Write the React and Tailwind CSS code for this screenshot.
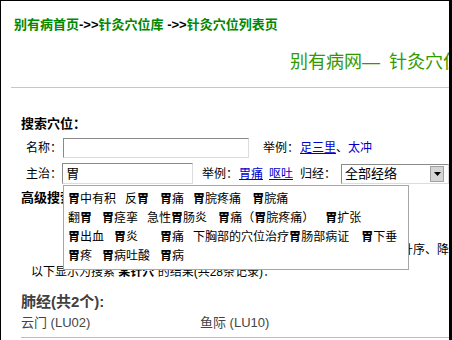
import React from 'react';

const font = "font-['Liberation_Sans','Noto_Sans_CJK_SC',sans-serif]";

// every 胃 in the suggestion list is shown in bold
function Hl({ text }) {
  const parts = text.split('胃');
  return (
    <span>
      {parts.map((p, i) => (
        <React.Fragment key={i}>
          {i > 0 && <b className="font-bold">胃</b>}
          {p}
        </React.Fragment>
      ))}
    </span>
  );
}

const suggestRows = [
  [['胃中有积', 9], ['反胃', 11], ['胃痛', 9], ['胃脘疼痛', 11], ['胃脘痛', 0]],
  [['翻胃', 10], ['胃痉挛', 9], ['急性胃肠炎', 11], ['胃痛（胃脘疼痛）', 11], ['胃扩张', 0]],
  [['胃出血', 10], ['胃炎', 22], ['胃痛', 9], ['下胸部的穴位治疗胃肠部病证', 12], ['胃下垂', 0]],
  [['胃疼', 10], ['胃病吐酸', 10], ['胃病', 0]],
];

export default function App() {
  return (
    <div className={`${font} relative w-[452px] h-[340px] overflow-hidden bg-white border-t border-l border-r-[3px] border-black text-black`}>
      {/* breadcrumb */}
      <div className="mt-[16px] pl-[13px] text-[13px] leading-[16px] font-bold whitespace-nowrap">
        <span className="text-[#008800]">别有病首页</span>
        <span>-&gt;&gt;</span>
        <span className="text-[#008800]">针灸穴位库</span>
        <span> -&gt;&gt;</span>
        <span className="text-[#008800]">针灸穴位列表页</span>
      </div>

      {/* title */}
      <div className="mt-[18px] pl-[289px] text-[18px] leading-[22px] text-[#339900] whitespace-nowrap">
        <span>别有病网—</span>
        <span className="ml-[9px]">针灸穴位库</span>
      </div>

      <div className="mt-[14px] ml-[10px] h-px bg-[#c4c8cc]" />

      {/* search form */}
      <div className="mt-[28px] pl-[20px] text-[13px] leading-[16px] font-bold">搜索穴位：</div>

      <div className="mt-[6px] flex items-center h-[20px] text-[12px] whitespace-nowrap">
        <span className="ml-[25px] w-[37px]">名称：</span>
        <div className="w-[186px] h-[20px] border border-t-[#8a8a8a] border-l-[#8a8a8a] border-b-[#dcdcdc] border-r-[#dcdcdc]" />
        <span className="ml-[14px]">举例：</span>
        <span className="ml-[1px] text-[#0000cc] underline">足三里</span>
        <span>、</span>
        <span className="text-[#0000cc]">太冲</span>
      </div>

      <div className="mt-[5px] flex items-center h-[21px] text-[12px] whitespace-nowrap">
        <span className="ml-[25px] w-[37px]">主治：</span>
        <div className="w-[133px] h-[21px] pl-[3px] leading-[19px] text-[13px] border border-t-[#8a8a8a] border-l-[#8a8a8a] border-b-[#dcdcdc] border-r-[#dcdcdc]">胃</div>
        <span className="ml-[9px]">举例：</span>
        <span className="ml-[1px] text-[#0000cc] underline">胃痛</span>
        <span className="ml-[6px] text-[#0000cc] underline">呕吐</span>
        <span className="ml-[7px]">归经：</span>
        <div className="ml-[5px] flex items-center w-[110px] h-[20px] border border-t-[#8a8a8a] border-l-[#8a8a8a] border-b-[#dcdcdc] border-r-[#dcdcdc]">
          <span className="flex-1 pl-[3px] text-[13px]">全部经络</span>
          <div className="mr-[4px] w-[14px] h-[16px] flex items-center justify-center bg-[#d4d4d4] border border-[#a0a0a0]">
            <svg width="7" height="4" viewBox="0 0 7 4"><polygon points="0,0 7,0 3.5,4" fill="#000" /></svg>
          </div>
        </div>
      </div>

      <div className="mt-[6px] pl-[20px] text-[13px] leading-[16px] font-bold">高级搜索</div>

      <div className="mt-[36px] pl-[400px] text-[12px] leading-[16px] whitespace-nowrap">升序、降序</div>

      <div className="mt-[6px] pl-[30px] text-[12px] leading-[16px] whitespace-nowrap">
        以下显示为搜索 <b className="font-bold">某针穴</b> 的结果(共28条记录)：
      </div>

      <div className="mt-[12px] pl-[20px] text-[15px] leading-[20px] font-bold text-[#404040]">肺经(共2个):</div>

      <div className="mt-[3px] flex text-[13px] leading-[16px] text-[#444]">
        <span className="ml-[20px] w-[179px]">云门 (LU02)</span>
        <span>鱼际 (LU10)</span>
      </div>

      <div className="mt-[6px] ml-[20px] h-px bg-[#bdbdbd]" />

      {/* autocomplete suggestions, over the form */}
      <div className="absolute left-[62px] top-[184px] w-[346px] h-[85px] bg-white border border-[#a6a6a6] pt-[4px] pl-[4px] text-[12px] leading-[19px]">
        {suggestRows.map((row, r) => (
          <div key={r} className="flex whitespace-nowrap">
            {row.map(([t, gap], i) => (
              <span key={i} style={{ marginRight: gap }}>
                <Hl text={t} />
              </span>
            ))}
          </div>
        ))}
      </div>
    </div>
  );
}
